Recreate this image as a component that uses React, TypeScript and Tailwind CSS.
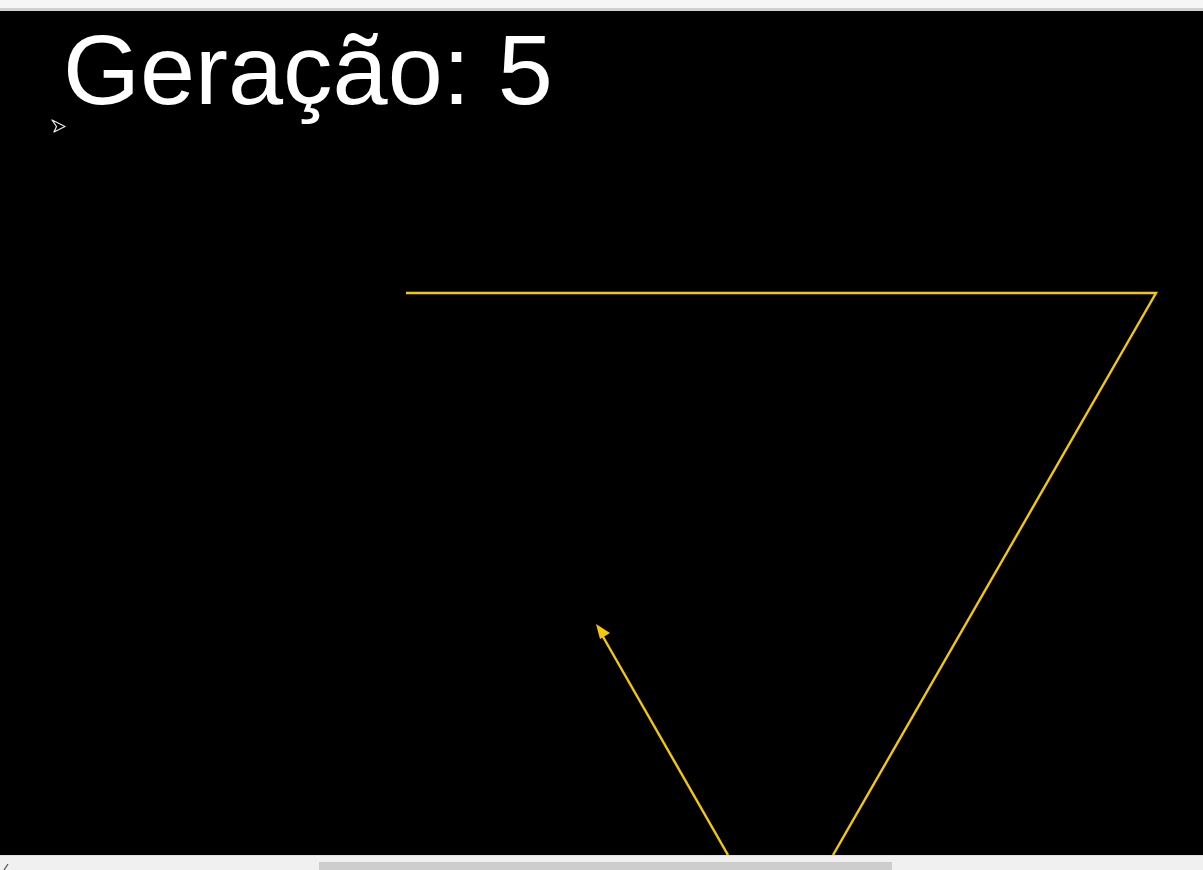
export default function App() {
  // canvas coords: screen y minus 11 (top bar height)
  return (
    <div className="flex h-screen w-full flex-col overflow-hidden bg-[#f5f5f5] font-['Liberation_Sans',Arial,sans-serif]">
      <div className="h-[11px] shrink-0 border-b-[3px] border-[#d0d0d0] bg-[#f6f6f6]" />
      <div className="relative flex-1 bg-black">
        <svg className="absolute inset-0 h-full w-full">
          <polygon
            points="52,109 65,115.5 54,121 56.5,115.5"
            fill="none"
            stroke="#e8e8e8"
            strokeWidth="1.3"
            strokeLinejoin="round"
          />
          <polyline
            points="406,282 1156,282 833,844"
            fill="none"
            stroke="#f5c800"
            strokeWidth="2.4"
          />
          <line x1="728" y1="844" x2="602" y2="624" stroke="#f5c800" strokeWidth="2.4" />
          <polygon points="596,613 610,622 600,628" fill="#f5c800" />
        </svg>
        <div className="relative pl-[63px] pt-[9px] text-[99px] leading-none text-white">
          Geração: 5
        </div>
      </div>
      <div className="flex h-[15px] shrink-0 flex-col bg-[#f0f0f0]">
        <div className="h-[7px] border-t border-[#e2e2e2]" />
        <div className="relative flex-1 bg-[#f0f0f0]">
          <svg className="absolute left-[3px] top-[2px]" width="6" height="6" viewBox="0 0 6 6">
            <path d="M5 0 L1 6" stroke="#505050" strokeWidth="1.2" fill="none" />
          </svg>
          <div className="ml-[319px] h-full w-[573px] bg-[#cdcdcd]" />
        </div>
      </div>
    </div>
  );
}
